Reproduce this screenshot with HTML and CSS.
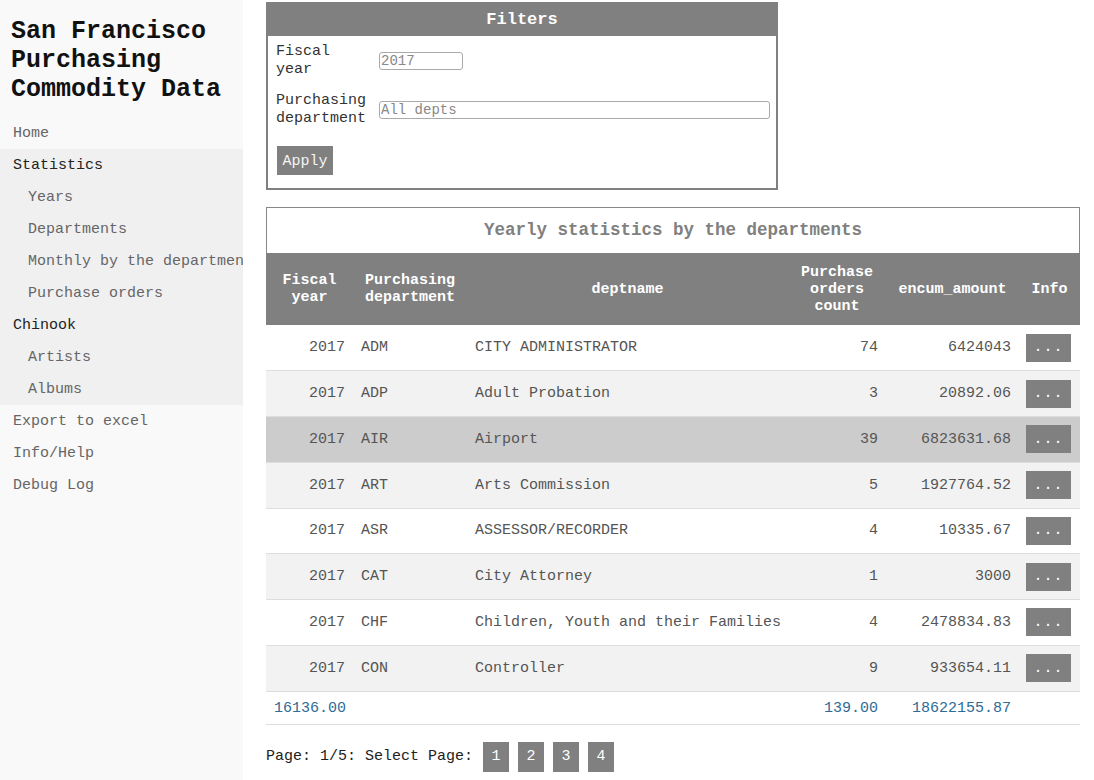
FILE: index.html
```html
<!DOCTYPE html>
<html>
<head>
<meta charset="utf-8">
<title>San Francisco Purchasing Commodity Data</title>
<link rel="stylesheet" href="styles.css">
</head>
<body>
<div class="layout">
  <aside class="sidebar">
    <h1 class="brand">San Francisco Purchasing Commodity Data</h1>
    <nav class="menu">
      <a class="item">Home</a>
      <div class="group">
        <a class="item head">Statistics</a>
        <a class="item sub">Years</a>
        <a class="item sub">Departments</a>
        <a class="item sub">Monthly by the departments</a>
        <a class="item sub">Purchase orders</a>
        <a class="item head">Chinook</a>
        <a class="item sub">Artists</a>
        <a class="item sub">Albums</a>
      </div>
      <a class="item">Export to excel</a>
      <a class="item">Info/Help</a>
      <a class="item">Debug Log</a>
    </nav>
  </aside>
  <main class="main">
    <section class="filters">
      <div class="filters-title">Filters</div>
      <div class="filters-body">
        <div class="field-grid">
          <label class="lbl">Fiscal year</label>
          <div class="ctl"><input class="inp inp-year" type="text" placeholder="2017"></div>
          <label class="lbl">Purchasing department</label>
          <div class="ctl"><input class="inp inp-dept" type="text" placeholder="All depts"></div>
        </div>
        <button class="btn apply">Apply</button>
      </div>
    </section>

    <section class="report">
      <div class="caption">Yearly statistics by the departments</div>
      <table class="grid">
        <colgroup>
          <col class="c1"><col class="c2"><col class="c3"><col class="c4"><col class="c5"><col class="c6">
        </colgroup>
        <thead>
          <tr>
            <th>Fiscal year</th>
            <th>Purchasing department</th>
            <th>deptname</th>
            <th>Purchase orders count</th>
            <th>encum_amount</th>
            <th>Info</th>
          </tr>
        </thead>
        <tbody>
          <tr><td class="r">2017</td><td>ADM</td><td>CITY ADMINISTRATOR</td><td class="r">74</td><td class="r">6424043</td><td class="info"><button class="btn dots">...</button></td></tr>
          <tr><td class="r">2017</td><td>ADP</td><td>Adult Probation</td><td class="r">3</td><td class="r">20892.06</td><td class="info"><button class="btn dots">...</button></td></tr>
          <tr class="hover"><td class="r">2017</td><td>AIR</td><td>Airport</td><td class="r">39</td><td class="r">6823631.68</td><td class="info"><button class="btn dots">...</button></td></tr>
          <tr><td class="r">2017</td><td>ART</td><td>Arts Commission</td><td class="r">5</td><td class="r">1927764.52</td><td class="info"><button class="btn dots">...</button></td></tr>
          <tr><td class="r">2017</td><td>ASR</td><td>ASSESSOR/RECORDER</td><td class="r">4</td><td class="r">10335.67</td><td class="info"><button class="btn dots">...</button></td></tr>
          <tr><td class="r">2017</td><td>CAT</td><td>City Attorney</td><td class="r">1</td><td class="r">3000</td><td class="info"><button class="btn dots">...</button></td></tr>
          <tr><td class="r">2017</td><td>CHF</td><td>Children, Youth and their Families</td><td class="r">4</td><td class="r">2478834.83</td><td class="info"><button class="btn dots">...</button></td></tr>
          <tr><td class="r">2017</td><td>CON</td><td>Controller</td><td class="r">9</td><td class="r">933654.11</td><td class="info"><button class="btn dots">...</button></td></tr>
        </tbody>
        <tfoot>
          <tr><td class="r">16136.00</td><td></td><td></td><td class="r">139.00</td><td class="r">18622155.87</td><td></td></tr>
        </tfoot>
      </table>
    </section>

    <div class="pager">
      <span class="pager-label">Page: 1/5: Select Page:</span>
      <button class="btn page">1</button>
      <button class="btn page">2</button>
      <button class="btn page">3</button>
      <button class="btn page">4</button>
    </div>
  </main>
</div>
</body>
</html>
```

FILE: styles.css
```css
* { box-sizing: border-box; }

html, body {
  margin: 0;
  padding: 0;
  background: #ffffff;
  font-family: "Liberation Mono", "Courier New", monospace;
  font-size: 15px;
  color: #555;
}

.layout {
  display: flex;
  min-height: 780px;
}

.sidebar {
  width: 243px;
  flex: 0 0 243px;
  background: #f9f9f9;
  overflow: hidden;
}

.brand {
  margin: 0;
  padding: 17px 11px 0;
  font-size: 25px;
  line-height: 29px;
  font-weight: bold;
  color: #111;
}

.menu {
  margin-top: 13px;
  display: flex;
  flex-direction: column;
}

.group {
  background: #f0f0f0;
  display: flex;
  flex-direction: column;
}

.item {
  display: block;
  height: 32px;
  line-height: 33px;
  padding-left: 13px;
  white-space: nowrap;
  color: #666;
  font-size: 15px;
}

.item.head { color: #222; }
.item.sub { padding-left: 28px; }

.main {
  flex: 1;
  padding: 2px 0 0 23px;
}

.filters {
  width: 512px;
  border: 2px solid #808080;
  border-top: 0;
}

.filters-title {
  background: #808080;
  color: #fff;
  font-weight: bold;
  font-size: 17px;
  text-align: center;
  height: 34px;
  line-height: 36px;
  margin: 0 -2px;
}

.filters-body {
  padding: 7px 7px 13px 8px;
}

.field-grid {
  display: grid;
  grid-template-columns: 103px 1fr;
  row-gap: 13px;
  align-items: center;
}

.lbl {
  line-height: 18px;
  color: #333;
  font-size: 15px;
  padding-right: 8px;
}

.inp {
  display: block;
  height: 18px;
  border: 1px solid #aaa;
  border-radius: 3px;
  padding: 0 1px;
  font-family: "Liberation Mono", "Courier New", monospace;
  font-size: 14px;
  color: #888;
  background: #fff;
}

.inp::placeholder { color: #888; }

.inp-year { width: 84px; }
.inp-dept { width: 391px; }

.btn {
  border: 0;
  background: #808080;
  color: #fff;
  font-family: "Liberation Mono", "Courier New", monospace;
  font-size: 15px;
  padding: 0;
  cursor: pointer;
}

.apply {
  margin-top: 18px;
  margin-left: 1px;
  width: 56px;
  height: 29px;
  padding-top: 2px;
  color: #f4f4f4;
}

.report {
  margin-top: 17px;
  width: 814px;
}

.caption {
  border: 1px solid #888;
  border-bottom: 0;
  height: 46px;
  line-height: 44px;
  text-align: center;
  color: #808080;
  font-weight: bold;
  font-size: 17.5px;
}

.grid {
  width: 814px;
  border-collapse: collapse;
  table-layout: fixed;
}

.c1 { width: 87px; }
.c2 { width: 114px; }
.c3 { width: 321px; }
.c4 { width: 98px; }
.c5 { width: 133px; }
.c6 { width: 61px; }

.grid th {
  background: #808080;
  color: #fff;
  font-weight: bold;
  font-size: 15px;
  line-height: 17px;
  height: 72px;
  padding: 0 8px;
  text-align: center;
  vertical-align: middle;
}

.grid td {
  padding: 1px 8px 0;
  height: 45.75px;
  line-height: 18px;
  color: #555;
  border-bottom: 1px solid #ddd;
  white-space: nowrap;
  vertical-align: middle;
}

.grid tbody tr:nth-child(even) td { background: #f2f2f2; }
.grid tbody tr.hover td { background: #cccccc; }

.grid td.r { text-align: right; }

.grid td.info {
  padding: 0 9px 0 7px;
}

.dots {
  display: block;
  width: 45px;
  height: 28px;
  font-size: 15px;
  letter-spacing: 1px;
}

.grid tfoot td {
  height: 33px;
  padding-top: 2px;
  color: #2e6b96;
  background: #fff;
}

.pager {
  margin-top: 17px;
  display: flex;
  align-items: center;
  gap: 9px;
  color: #222;
}

.pager-label {
  margin-right: 1px;
}

.page {
  width: 26px;
  height: 30px;
  color: #fff;
  font-size: 15px;
}
```
